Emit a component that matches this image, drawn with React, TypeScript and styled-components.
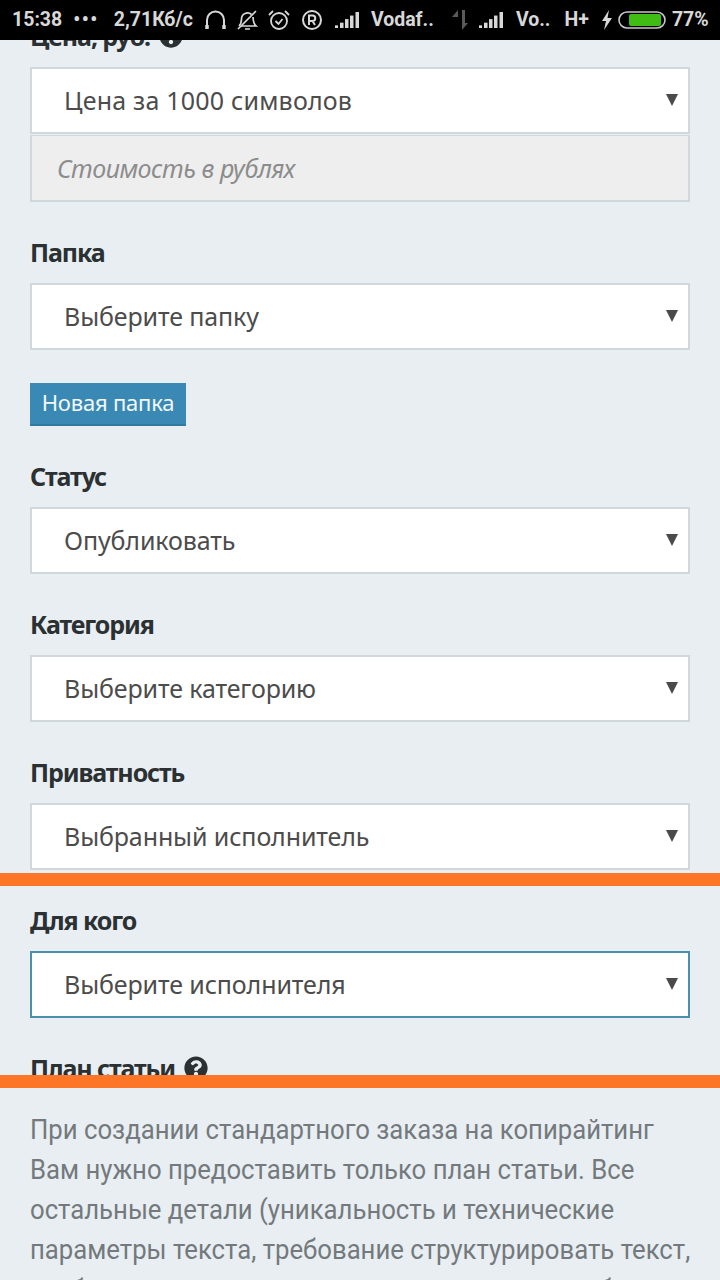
import styled, { createGlobalStyle } from "styled-components";
import { FaQuestionCircle } from "react-icons/fa";

const GlobalStyle = createGlobalStyle`
  html, body {
    margin: 0;
    padding: 0;
    background: #e8eef1;
  }
  * {
    box-sizing: border-box;
  }
`;

const Page = styled.div`
  position: relative;
  width: 720px;
  height: 1280px;
  overflow: hidden;
  display: flex;
  flex-direction: column;
  background: #e8eef1;
  font-family: "Noto Sans", "Open Sans", sans-serif;
`;

const StatusBar = styled.div`
  position: relative;
  z-index: 1;
  height: 40px;
  flex-shrink: 0;
  background: #000;
  color: #d8d8d8;
  display: flex;
  align-items: center;
  padding: 0 13px 0 12px;
  font-family: Roboto, sans-serif;
  font-size: 19.5px;
  font-weight: 700;
  white-space: nowrap;
`;

const StatusText = styled.span<{ $left?: number }>`
  margin-left: ${(p) => p.$left ?? 0}px;
  line-height: 40px;
`;

const Dots = styled(StatusText)`
  letter-spacing: 1.5px;
`;

const StatusIcon = styled.svg<{ $left: number }>`
  margin-left: ${(p) => p.$left}px;
  flex-shrink: 0;
  display: block;
`;

const FormClip = styled.div`
  height: 1035px;
  flex-shrink: 0;
  overflow: hidden;
`;

const Form = styled.div`
  margin-top: -19px;
  padding: 0 30px;
`;

const Field = styled.div`
  margin-bottom: 35px;
`;

const Label = styled.div`
  display: flex;
  align-items: center;
  gap: 9px;
  height: 30px;
  margin-bottom: 16px;
  font-size: 25px;
  font-weight: 700;
  color: #2b3032;
  letter-spacing: -1.1px;
`;

const HelpIcon = styled(FaQuestionCircle)`
  width: 24px;
  height: 24px;
  color: #2b3032;
`;

const SelectBox = styled.div<{ $focused?: boolean; $spacing: number }>`
  position: relative;
  height: 67px;
  display: flex;
  align-items: center;
  padding: 0 0 2px 32px;
  background: #fff;
  border: 2px solid ${(p) => (p.$focused ? "#4b8fad" : "#cfd9dc")};
  font-size: 25px;
  color: #4c4c4c;
  letter-spacing: ${(p) => p.$spacing}px;
`;

const Caret = styled.svg`
  position: absolute;
  right: 10px;
  top: 25px;
`;

const DisabledInput = styled.div`
  height: 67px;
  display: flex;
  align-items: center;
  padding-left: 25px;
  margin-top: 1px;
  background: #eeeeee;
  border: 2px solid #cfd9dc;
  border-top-width: 1px;
  font-size: 25px;
  font-style: italic;
  color: #8c8c8c;
  letter-spacing: -0.5px;
`;

const ActionButton = styled.button`
  display: block;
  width: 156px;
  height: 43px;
  margin: -2px 0 35px;
  padding: 0 0 4px;
  background: #3a89b5;
  border: none;
  border-bottom: 2px solid #327aa2;
  font-family: inherit;
  font-size: 22px;
  color: #f2f8fb;
  letter-spacing: -0.2px;
`;

const OrangeBar = styled.div`
  height: 13px;
  flex-shrink: 0;
  background: #fd7526;
`;

const OverlayBar = styled(OrangeBar)`
  position: absolute;
  left: 0;
  right: 0;
  top: 873px;
`;

const Hint = styled.p`
  margin: 0;
  padding: 22px 30px 0;
  width: 760px;
  font-family: Roboto, sans-serif;
  font-size: 27px;
  line-height: 40px;
  color: #73797c;
  white-space: nowrap;
  transform: scaleX(0.952);
  transform-origin: 30px 0;
`;

const FIELDS_BEFORE_BUTTON = [{ label: "Папка", value: "Выберите папку" }];

const FIELDS_AFTER_BUTTON = [
  { label: "Статус", value: "Опубликовать" },
  { label: "Категория", value: "Выберите категорию" },
  { label: "Приватность", value: "Выбранный исполнитель" },
  { label: "Для кого", value: "Выберите исполнителя", focused: true },
];

function Select({
  value,
  focused,
  spacing = -0.12,
}: {
  value: string;
  focused?: boolean;
  spacing?: number;
}) {
  return (
    <SelectBox $focused={focused} $spacing={spacing}>
      {value}
      <Caret width="12" height="12" viewBox="0 0 12 12">
        <path d="M0 0h12L6 12z" fill="#4a4a4a" />
      </Caret>
    </SelectBox>
  );
}

function Signal({ left }: { left: number }) {
  return (
    <StatusIcon
      $left={left}
      width="25"
      height="16"
      viewBox="0 0 25 18"
      preserveAspectRatio="none"
      fill="#d8d8d8"
    >
      <rect x="0" y="15" width="3" height="3" />
      <rect x="5" y="12" width="3.5" height="6" />
      <rect x="10" y="8" width="3.5" height="10" />
      <rect x="15" y="4" width="3.5" height="14" />
      <rect x="20.5" y="0" width="3.5" height="18" />
    </StatusIcon>
  );
}

export default function App() {
  return (
    <Page>
      <GlobalStyle />
      <StatusBar>
        <StatusText>15:38</StatusText>
        <Dots $left={11}>•••</Dots>
        <StatusText $left={15}>2,71Кб/с</StatusText>
        <StatusIcon $left={12} width="21" height="20" viewBox="0 0 21 20" fill="none" stroke="#d8d8d8" strokeWidth="2">
          <path d="M2 18V10a8.500 8.500 0 0 1 17 0v8" />
          <path d="M2 15v4M19 15v4" strokeWidth="3.500" />
        </StatusIcon>
        <StatusIcon $left={11} width="21" height="22" viewBox="0 0 21 22" fill="none" stroke="#d8d8d8" strokeWidth="1.700">
          <path d="M2 17c2-2 2.500-4 2.500-7a6 6 0 0 1 10-4.500M16 8c.2 4 .6 7 3 9H4" />
          <path d="M8 20h5M1 20 19 2" />
        </StatusIcon>
        <StatusIcon $left={10} width="22" height="22" viewBox="0 0 22 22" fill="none" stroke="#d8d8d8" strokeWidth="1.800">
          <circle cx="11" cy="12" r="8" />
          <path d="M7.500 12l3 3 4-5M1 6l4-4M21 6l-4-4" />
        </StatusIcon>
        <StatusIcon $left={12} width="20" height="20" viewBox="0 0 20 20" fill="none" stroke="#d8d8d8" strokeWidth="2">
          <circle cx="10" cy="10" r="9" />
          <path d="M7 15V5.500h3.500a2.500 2.500 0 0 1 0 5.500H7M10.500 11l2.500 4" />
        </StatusIcon>
        <Signal left={13} />
        <StatusText $left={11}>Vodaf..</StatusText>
        <StatusIcon $left={17} width="18" height="20" viewBox="0 0 18 20" fill="#5a5a5a">
          <path d="M7 20V7H1l6-7zM11 0v20l6-7h-3V0z" />
        </StatusIcon>
        <Signal left={10} />
        <StatusText $left={12}>Vo..</StatusText>
        <StatusText $left={14}>H+</StatusText>
        <StatusIcon $left={13} width="10" height="20" viewBox="0 0 10 20" fill="#d8d8d8">
          <path d="M7 0 0 11h4l-2 9 8-12H5.500z" />
        </StatusIcon>
        <StatusIcon $left={6} width="48" height="20" viewBox="0 0 48 20">
          <rect x="1" y="2" width="46" height="16" rx="8" fill="none" stroke="#c8c8c8" strokeWidth="1.600" />
          <rect x="11" y="4" width="32" height="12" rx="2" fill="#3fbd12" />
        </StatusIcon>
        <StatusText $left={6}>77%</StatusText>
      </StatusBar>

      <FormClip>
        <Form>
          <Field>
            <Label>
              Цена, руб.
              <HelpIcon />
            </Label>
            <Select value="Цена за 1000 символов" spacing={0.2} />
            <DisabledInput>Стоимость в рублях</DisabledInput>
          </Field>
          {FIELDS_BEFORE_BUTTON.map((f) => (
            <Field key={f.label}>
              <Label>{f.label}</Label>
              <Select value={f.value} />
            </Field>
          ))}
          <ActionButton>Новая папка</ActionButton>
          {FIELDS_AFTER_BUTTON.map((f) => (
            <Field key={f.label}>
              <Label>{f.label}</Label>
              <Select value={f.value} focused={f.focused} />
            </Field>
          ))}
          <Field>
            <Label>
              План статьи
              <HelpIcon />
            </Label>
          </Field>
        </Form>
      </FormClip>
      <OrangeBar />
      <OverlayBar />
      <Hint>
        При создании стандартного заказа на копирайтинг
        <br />
        Вам нужно предоставить только план статьи. Все
        <br />
        остальные детали (уникальность и технические
        <br />
        параметры текста, требование структурировать текст,
        <br />
        требование к наличию ключевых слов и иное, будут
      </Hint>
    </Page>
  );
}
